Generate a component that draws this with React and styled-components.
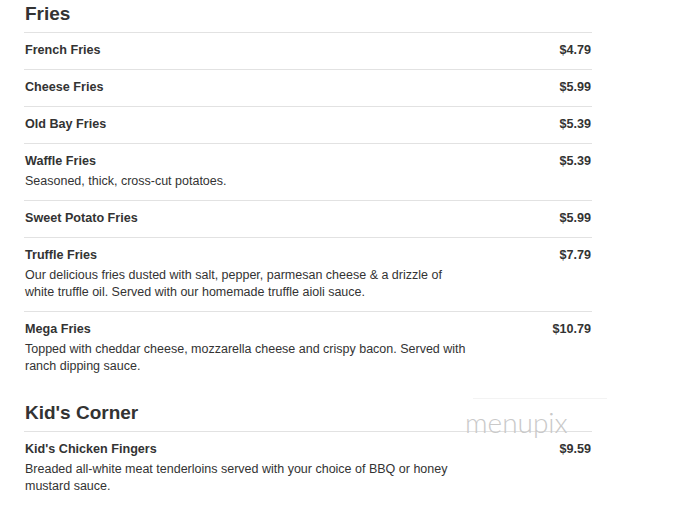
import React from 'react';
import styled, { createGlobalStyle } from 'styled-components';

const GlobalStyle = createGlobalStyle`
  body {
    margin: 0;
    background: #fff;
    font-family: "Liberation Sans", Arial, sans-serif;
    color: #333;
  }
`;

const sections = [
  {
    title: 'Fries',
    items: [
      { name: 'French Fries', price: '$4.79' },
      { name: 'Cheese Fries', price: '$5.99' },
      { name: 'Old Bay Fries', price: '$5.39' },
      { name: 'Waffle Fries', price: '$5.39', desc: 'Seasoned, thick, cross-cut potatoes.' },
      { name: 'Sweet Potato Fries', price: '$5.99' },
      {
        name: 'Truffle Fries',
        price: '$7.79',
        desc: 'Our delicious fries dusted with salt, pepper, parmesan cheese & a drizzle of white truffle oil. Served with our homemade truffle aioli sauce.',
      },
      {
        name: 'Mega Fries',
        price: '$10.79',
        desc: 'Topped with cheddar cheese, mozzarella cheese and crispy bacon. Served with ranch dipping sauce.',
      },
    ],
  },
  {
    title: "Kid's Corner",
    items: [
      {
        name: "Kid's Chicken Fingers",
        price: '$9.59',
        desc: 'Breaded all-white meat tenderloins served with your choice of BBQ or honey mustard sauce.',
      },
    ],
  },
];

const App = () => {
  return (
    <>
      <GlobalStyle />
      <Page>
        {sections.map((section) => (
          <Section key={section.title}>
            <Heading>{section.title}</Heading>
            {section.items.map((item) => (
              <Item key={item.name}>
                <Main>
                  <Name>{item.name}</Name>
                  {item.desc && <Desc>{item.desc}</Desc>}
                </Main>
                <Price>{item.price}</Price>
              </Item>
            ))}
          </Section>
        ))}
        <Watermark>menupix</Watermark>
      </Page>
    </>
  );
};

export default App;

const Page = styled.div`
  position: relative;
  width: 568px;
  margin-left: 24px;
  padding-top: 2px;
`;

const Section = styled.section`
  margin-bottom: 16px;
`;

const Heading = styled.h2`
  margin: 0;
  font-size: 19px;
  line-height: 24px;
  font-weight: 700;
  color: #333;
  padding-bottom: 6px;
  padding-left: 1px;
`;

const Item = styled.div`
  display: flex;
  justify-content: space-between;
  align-items: flex-start;
  border-top: 1px solid #e2e2e2;
  padding: 9px 1px 10px 1px;
`;

const Main = styled.div`
  width: 447px;
`;

const Name = styled.div`
  font-size: 12.6px;
  line-height: 17px;
  font-weight: 700;
  color: #333;
`;

const Desc = styled.p`
  margin: 3px 0 0;
  font-size: 12.5px;
  line-height: 17px;
  color: #333;
`;

const Price = styled.div`
  font-size: 12.6px;
  line-height: 17px;
  font-weight: 700;
  color: #333;
`;

const Watermark = styled.div`
  position: absolute;
  left: 441px;
  top: 404px;
  font-family: Lato, "DejaVu Sans", sans-serif;
  font-weight: 300;
  font-size: 28px;
  line-height: 36px;
  color: #c9c9c9;

  &::before {
    content: '';
    position: absolute;
    left: 8px;
    top: -6px;
    width: 134px;
    border-top: 1px solid #f3f3f3;
  }
`;
